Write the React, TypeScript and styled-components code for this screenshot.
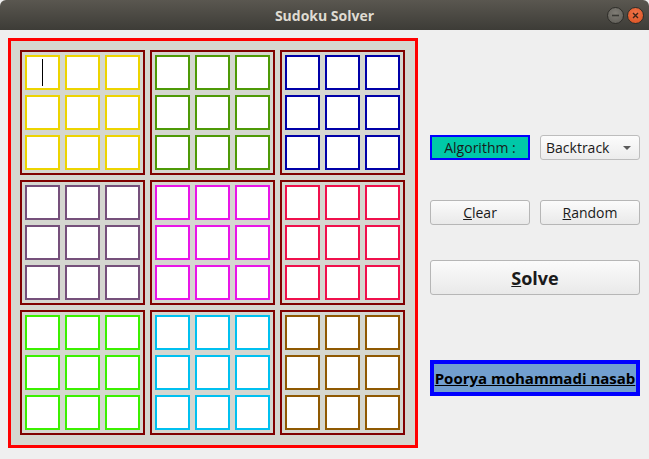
import React from 'react'
import styled, { createGlobalStyle } from 'styled-components'

const GlobalStyle = createGlobalStyle`
  html, body {
    margin: 0;
    padding: 0;
    background: #efefef;
    font-family: 'Open Sans', 'DejaVu Sans', sans-serif;
  }
  * {
    box-sizing: border-box;
  }
`

const boxColors = [
  '#edd400',
  '#4e9a06',
  '#0000a8',
  '#75507b',
  '#e816e8',
  '#f0104c',
  '#3cf000',
  '#00c0f0',
  '#8f5902',
]

const Window = styled.div`
  width: 649px;
  height: 459px;
  display: flex;
  flex-direction: column;
  background: #efefef;
  overflow: hidden;
`

const TitleBar = styled.div`
  height: 30px;
  flex: none;
  position: relative;
  display: flex;
  align-items: center;
  justify-content: center;
  background: linear-gradient(#5a5750, #3d3c37);
  border-radius: 6px 6px 0 0;
  color: #dfdbd2;
  font-weight: bold;
  font-size: 14px;
`

const WindowButtons = styled.div`
  position: absolute;
  right: 5px;
  top: 7px;
  display: flex;
  gap: 3px;
`

const RoundButton = styled.span<{ $close?: boolean }>`
  width: 17px;
  height: 17px;
  border-radius: 50%;
  display: flex;
  align-items: center;
  justify-content: center;
  background: ${({ $close }) =>
    $close ? 'radial-gradient(circle at 50% 35%, #f0744a, #d9501f)' : 'radial-gradient(circle at 50% 35%, #807d76, #5c5a54)'};
  border: 1px solid #2e2d29;
`

const Content = styled.div`
  flex: 1;
  display: flex;
  padding: 8px 0 0 8px;
  gap: 12px;
`

const Board = styled.div`
  width: 410px;
  height: 410px;
  border: 3px solid #ff0000;
  background: #d5d7d0;
  padding: 9px;
  display: grid;
  grid-template-columns: repeat(3, 125px);
  grid-template-rows: repeat(3, 125px);
  gap: 5px;
`

const Box = styled.div`
  border: 2px solid #800000;
  padding: 3px;
  display: grid;
  grid-template-columns: repeat(3, 35px);
  grid-template-rows: repeat(3, 35px);
  gap: 5px;
`

const Cell = styled.div<{ $color: string }>`
  background: #ffffff;
  border: 2px solid ${({ $color }) => $color};
  display: flex;
  align-items: center;
  justify-content: center;
`

const Caret = styled.span`
  width: 1px;
  height: 27px;
  background: #000;
`

const Panel = styled.div`
  width: 210px;
  display: flex;
  flex-direction: column;
  padding-top: 97px;
`

const Row = styled.div<{ $top?: number }>`
  display: flex;
  gap: 10px;
  margin-top: ${({ $top }) => $top ?? 0}px;
`

const AlgoLabel = styled.div`
  width: 100px;
  height: 25px;
  border: 2px solid #0000ff;
  background: #00c8a8;
  display: flex;
  align-items: center;
  justify-content: center;
  font-size: 14px;
  color: #1a1a1a;
`

const Combo = styled.div`
  width: 100px;
  height: 25px;
  border: 1px solid #bdbdbd;
  border-radius: 3px;
  background: linear-gradient(#fcfcfc, #ececec);
  display: flex;
  align-items: center;
  justify-content: space-between;
  padding: 0 8px 0 5px;
  font-size: 14px;
  color: #1a1a1a;
`

const Arrow = styled.span`
  width: 0;
  height: 0;
  border-left: 4px solid transparent;
  border-right: 4px solid transparent;
  border-top: 4px solid #5a5a5a;
`

const Button = styled.button<{ $big?: boolean; $top?: number }>`
  width: ${({ $big }) => ($big ? '210px' : '100px')};
  height: ${({ $big }) => ($big ? '35px' : '25px')};
  margin-top: ${({ $top }) => $top ?? 0}px;
  border: 1px solid #b6b6b6;
  border-radius: 3px;
  background: linear-gradient(#fbfbfb, #e9e9e9);
  font-family: 'Open Sans', 'DejaVu Sans', sans-serif;
  font-size: ${({ $big }) => ($big ? '18px' : '14px')};
  font-weight: ${({ $big }) => ($big ? 'bold' : 'normal')};
  color: #1a1a1a;
  padding: 0;
  display: flex;
  align-items: center;
  justify-content: center;
`

const NameLabel = styled.div`
  width: 210px;
  height: 36px;
  margin-top: 65px;
  border: 4px solid #0000ff;
  background: #729fcf;
  display: flex;
  align-items: center;
  justify-content: center;
  font-size: 15px;
  font-weight: bold;
  text-decoration: underline;
  color: #000;
  white-space: nowrap;
`

export default function App() {
  return (
    <Window>
      <GlobalStyle />
      <TitleBar>
        Sudoku Solver
        <WindowButtons>
          <RoundButton>
            <svg width="9" height="9" viewBox="0 0 9 9">
              <path d="M1 4.5h7" stroke="#3a3935" strokeWidth="1.6" />
            </svg>
          </RoundButton>
          <RoundButton $close>
            <svg width="9" height="9" viewBox="0 0 9 9">
              <path d="M2 2l5 5M7 2l-5 5" stroke="#3a2418" strokeWidth="1.4" />
            </svg>
          </RoundButton>
        </WindowButtons>
      </TitleBar>
      <Content>
        <Board>
          {boxColors.map((color, b) => (
            <Box key={b}>
              {Array.from({ length: 9 }).map((_, c) => (
                <Cell key={c} $color={color}>
                  {b === 0 && c === 0 && <Caret />}
                </Cell>
              ))}
            </Box>
          ))}
        </Board>
        <Panel>
          <Row>
            <AlgoLabel>Algorithm :</AlgoLabel>
            <Combo>
              Backtrack
              <Arrow />
            </Combo>
          </Row>
          <Row $top={40}>
            <Button>
              <u>C</u>lear
            </Button>
            <Button>
              <u>R</u>andom
            </Button>
          </Row>
          <Button $big $top={35}>
            <u>S</u>olve
          </Button>
          <NameLabel>Poorya mohammadi nasab</NameLabel>
        </Panel>
      </Content>
    </Window>
  )
}
